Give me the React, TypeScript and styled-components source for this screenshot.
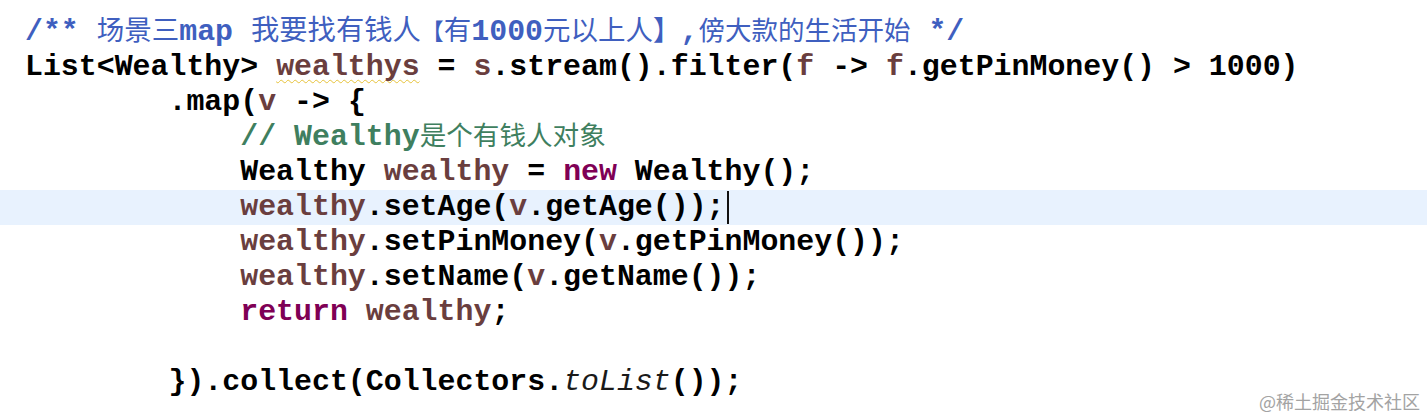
import React from "react";
import styled, { createGlobalStyle, css } from "styled-components";

const Global = createGlobalStyle`
  html, body { margin: 0; padding: 0; background: #ffffff; }
  #root { width: 1427px; height: 417px; }
`;

type Kind = "plain" | "doc" | "var" | "kw" | "comment" | "static";

const colors: Record<Kind, string> = {
  plain: "#000000",
  doc: "#3F5FBF",
  var: "#6A3E3E",
  kw: "#7F0055",
  comment: "#3F7F5F",
  static: "#1a1a1a",
};

const Editor = styled.div`
  position: relative;
  width: 1427px;
  height: 417px;
  overflow: hidden;
  background: #ffffff;
  padding-top: 15px;
  box-sizing: border-box;
  display: flex;
  flex-direction: column;
`;

const Line = styled.div<{ $active?: boolean }>`
  height: 35px;
  line-height: 35px;
  padding-left: 25px;
  white-space: pre;
  font-family: "Liberation Mono", "Courier New", monospace;
  font-weight: 700;
  font-size: 29.9px;
  color: #000;
  background: ${(p) => (p.$active ? "#E8F2FE" : "transparent")};
`;

const Tok = styled.span<{ $kind: Kind; $warn?: boolean }>`
  color: ${(p) => colors[p.$kind]};
  ${(p) =>
    p.$kind === "static" &&
    css`
      font-style: italic;
      font-weight: 400;
    `}
  ${(p) =>
    p.$warn &&
    css`
      text-decoration: underline wavy #e6c23a;
      text-decoration-thickness: 1px;
      text-underline-offset: 4px;
      text-decoration-skip-ink: none;
    `}
`;

const Cjk = styled.span<{ $kind: Kind; $size?: number }>`
  display: inline-block;
  line-height: 24px;
  color: ${(p) => colors[p.$kind]};
  font-family: "Noto Sans CJK SC", sans-serif;
  font-weight: 400;
  font-size: ${(p) => p.$size ?? 27.5}px;
`;

const Caret = styled.span`
  display: inline-block;
  width: 2px;
  height: 33px;
  margin-left: 2px;
  vertical-align: top;
  margin-top: 1px;
  background: #111;
`;

const Watermark = styled.div`
  position: absolute;
  right: 7px;
  bottom: 6px;
  font-family: "Noto Sans CJK SC", sans-serif;
  font-size: 18px;
  line-height: 20px;
  color: #a3a3a3;
`;

const I4 = "    ";

export default function App() {
  return (
    <>
      <Global />
      <Editor>
        <Line>
          <Tok $kind="doc">/** </Tok>
          <Cjk $kind="doc">场景三</Cjk>
          <Tok $kind="doc">map </Tok>
          <Cjk $kind="doc" $size={28.3}>我要找有钱人</Cjk>
          <Cjk $kind="doc" $size={23}>【</Cjk>
          <Cjk $kind="doc">有</Cjk>
          <Tok $kind="doc">1000</Tok>
          <Cjk $kind="doc">元以上人】</Cjk>
          <Tok $kind="doc">,</Tok>
          <Cjk $kind="doc" $size={26.5}>傍大款的生活开始</Cjk>
          <Tok $kind="doc"> */</Tok>
        </Line>
        <Line>
          <Tok $kind="plain">List&lt;Wealthy&gt; </Tok>
          <Tok $kind="var" $warn>wealthys</Tok>
          <Tok $kind="plain"> = </Tok>
          <Tok $kind="var">s</Tok>
          <Tok $kind="plain">.stream().filter(</Tok>
          <Tok $kind="var">f</Tok>
          <Tok $kind="plain"> -&gt; </Tok>
          <Tok $kind="var">f</Tok>
          <Tok $kind="plain">.getPinMoney() &gt; 1000)</Tok>
        </Line>
        <Line>
          <Tok $kind="plain">{I4 + I4}.map(</Tok>
          <Tok $kind="var">v</Tok>
          <Tok $kind="plain"> -&gt; {"{"}</Tok>
        </Line>
        <Line>
          <Tok $kind="comment">{I4 + I4 + I4}// Wealthy</Tok>
          <Cjk $kind="comment" $size={26.6}>是个有钱人对象</Cjk>
        </Line>
        <Line>
          <Tok $kind="plain">{I4 + I4 + I4}Wealthy </Tok>
          <Tok $kind="var">wealthy</Tok>
          <Tok $kind="plain"> = </Tok>
          <Tok $kind="kw">new</Tok>
          <Tok $kind="plain"> Wealthy();</Tok>
        </Line>
        <Line $active>
          <Tok $kind="plain">{I4 + I4 + I4}</Tok>
          <Tok $kind="var">wealthy</Tok>
          <Tok $kind="plain">.setAge(</Tok>
          <Tok $kind="var">v</Tok>
          <Tok $kind="plain">.getAge());</Tok>
          <Caret />
        </Line>
        <Line>
          <Tok $kind="plain">{I4 + I4 + I4}</Tok>
          <Tok $kind="var">wealthy</Tok>
          <Tok $kind="plain">.setPinMoney(</Tok>
          <Tok $kind="var">v</Tok>
          <Tok $kind="plain">.getPinMoney());</Tok>
        </Line>
        <Line>
          <Tok $kind="plain">{I4 + I4 + I4}</Tok>
          <Tok $kind="var">wealthy</Tok>
          <Tok $kind="plain">.setName(</Tok>
          <Tok $kind="var">v</Tok>
          <Tok $kind="plain">.getName());</Tok>
        </Line>
        <Line>
          <Tok $kind="plain">{I4 + I4 + I4}</Tok>
          <Tok $kind="kw">return</Tok>
          <Tok $kind="plain"> </Tok>
          <Tok $kind="var">wealthy</Tok>
          <Tok $kind="plain">;</Tok>
        </Line>
        <Line />
        <Line>
          <Tok $kind="plain">{I4 + I4}{"}"}).collect(Collectors.</Tok>
          <Tok $kind="static">toList</Tok>
          <Tok $kind="plain">());</Tok>
        </Line>
        <Watermark>@稀土掘金技术社区</Watermark>
      </Editor>
    </>
  );
}
